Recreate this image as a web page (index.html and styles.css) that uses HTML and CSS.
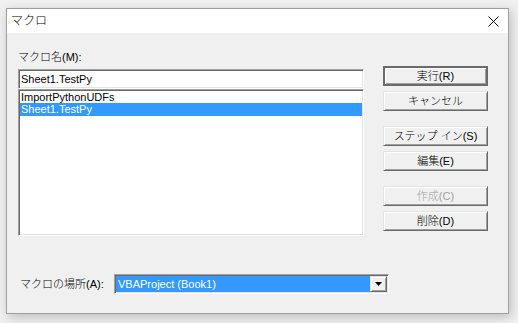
FILE: index.html
```html
<!DOCTYPE html>
<html lang="ja">
<head>
<meta charset="utf-8">
<title>マクロ</title>
<link rel="stylesheet" href="styles.css">
</head>
<body>
<div class="window">
  <div class="titlebar">
    <span class="title">マクロ</span>
    <svg class="close" width="11" height="11" viewBox="0 0 11 11"><path d="M0.5 0.5 L10.5 10.5 M10.5 0.5 L0.5 10.5" stroke="#000" stroke-width="1" fill="none"/></svg>
  </div>
  <div class="client">
    <div class="main">
      <div class="left">
        <div class="label">マクロ名(M):</div>
        <div class="field sunken">Sheet1.TestPy</div>
        <div class="list sunken">
          <div class="item">ImportPythonUDFs</div>
          <div class="item selected">Sheet1.TestPy</div>
        </div>
      </div>
      <div class="buttons">
        <div class="group">
          <div class="btn default">実行(R)</div>
          <div class="btn">キャンセル</div>
        </div>
        <div class="group">
          <div class="btn">ステップ イン(S)</div>
          <div class="btn">編集(E)</div>
        </div>
        <div class="group">
          <div class="btn disabled">作成(C)</div>
          <div class="btn">削除(D)</div>
        </div>
      </div>
    </div>
    <div class="location">
      <span class="loc-label">マクロの場所(A):</span>
      <div class="combo sunken">
        <div class="combo-value">VBAProject (Book1)</div>
        <div class="combo-arrow"><svg width="7" height="4" viewBox="0 0 7 4"><polygon points="0,0 7,0 3.5,4" fill="#000"/></svg></div>
      </div>
    </div>
  </div>
</div>
</body>
</html>
```
FILE: styles.css
```css
html, body {
  margin: 0;
  padding: 0;
}
body {
  background: #f0f0f0;
  font-family: "Liberation Sans", "Noto Sans CJK JP", sans-serif;
  font-size: 11px;
  font-weight: 300;
  color: #000;
  width: 518px;
  height: 323px;
  overflow: hidden;
}
.window {
  margin: 8px 0 0 6px;
  width: 503px;
  height: 306px;
  box-sizing: border-box;
  border: 1px solid #a0a0a0;
  background: #f0f0f0;
  box-shadow: 2px 3px 10px rgba(0, 0, 0, 0.22);
  display: flex;
  flex-direction: column;
}
.titlebar {
  height: 24px;
  flex: none;
  background: #fff;
  display: flex;
  align-items: center;
  justify-content: space-between;
  padding: 0 9px 0 4px;
}
.title {
  font-size: 12px;
  line-height: 14px;
}
.close {
  display: block;
}
.client {
  flex: 1;
  padding-left: 11px;
}
.main {
  display: flex;
  gap: 19px;
  align-items: flex-start;
}
.left {
  width: 346px;
  padding-top: 17px;
}
.label {
  height: 14px;
  line-height: 14px;
  margin-bottom: 5px;
}
.sunken {
  box-sizing: border-box;
  background: #fff;
  border: 1px solid;
  border-color: #a0a0a0 #fff #fff #a0a0a0;
  box-shadow: inset 1px 1px 0 #696969, inset -1px -1px 0 #e3e3e3;
}
.field {
  height: 20px;
  line-height: 17px;
  padding: 1px 2px 0;
}
.list {
  height: 147px;
  padding: 1px 1px 0;
}
.item {
  height: 12px;
  line-height: 12px;
  padding-left: 1px;
  white-space: nowrap;
}
.item.selected {
  height: 13px;
  background: #3399ff;
  color: #fff;
}
.buttons {
  margin-top: 33px;
  display: flex;
  flex-direction: column;
  gap: 15px;
}
.group {
  display: flex;
  flex-direction: column;
  gap: 5px;
}
.btn {
  width: 105px;
  height: 20px;
  box-sizing: border-box;
  display: flex;
  align-items: center;
  justify-content: center;
  background: #f0f0f0;
  border: 1px solid;
  border-color: #e3e3e3 #696969 #696969 #e3e3e3;
  box-shadow: inset 1px 1px 0 #fff, inset -1px -1px 0 #a0a0a0;
  line-height: 14px;
  white-space: nowrap;
}
.btn.default {
  border: 2px solid #6a6a6a;
  box-shadow: inset 1px 1px 0 #fff, inset -1px -1px 0 #a0a0a0;
}
.btn.disabled {
  color: #a0a0a0;
}
.location {
  margin-top: 38px;
  margin-left: 2px;
  display: flex;
  align-items: center;
}
.loc-label {
  width: 94px;
  line-height: 14px;
}
.combo {
  width: 275px;
  height: 20px;
  padding: 1px;
  display: flex;
}
.combo-value {
  flex: 1;
  background: #3399ff;
  color: #fff;
  line-height: 16px;
  padding-left: 2px;
  white-space: nowrap;
}
.combo-arrow {
  width: 17px;
  box-sizing: border-box;
  background: #f0f0f0;
  border: 1px solid;
  border-color: #e3e3e3 #696969 #696969 #e3e3e3;
  box-shadow: inset 1px 1px 0 #fff, inset -1px -1px 0 #a0a0a0;
  display: flex;
  align-items: center;
  justify-content: center;
}
.combo-arrow svg {
  display: block;
}
```
